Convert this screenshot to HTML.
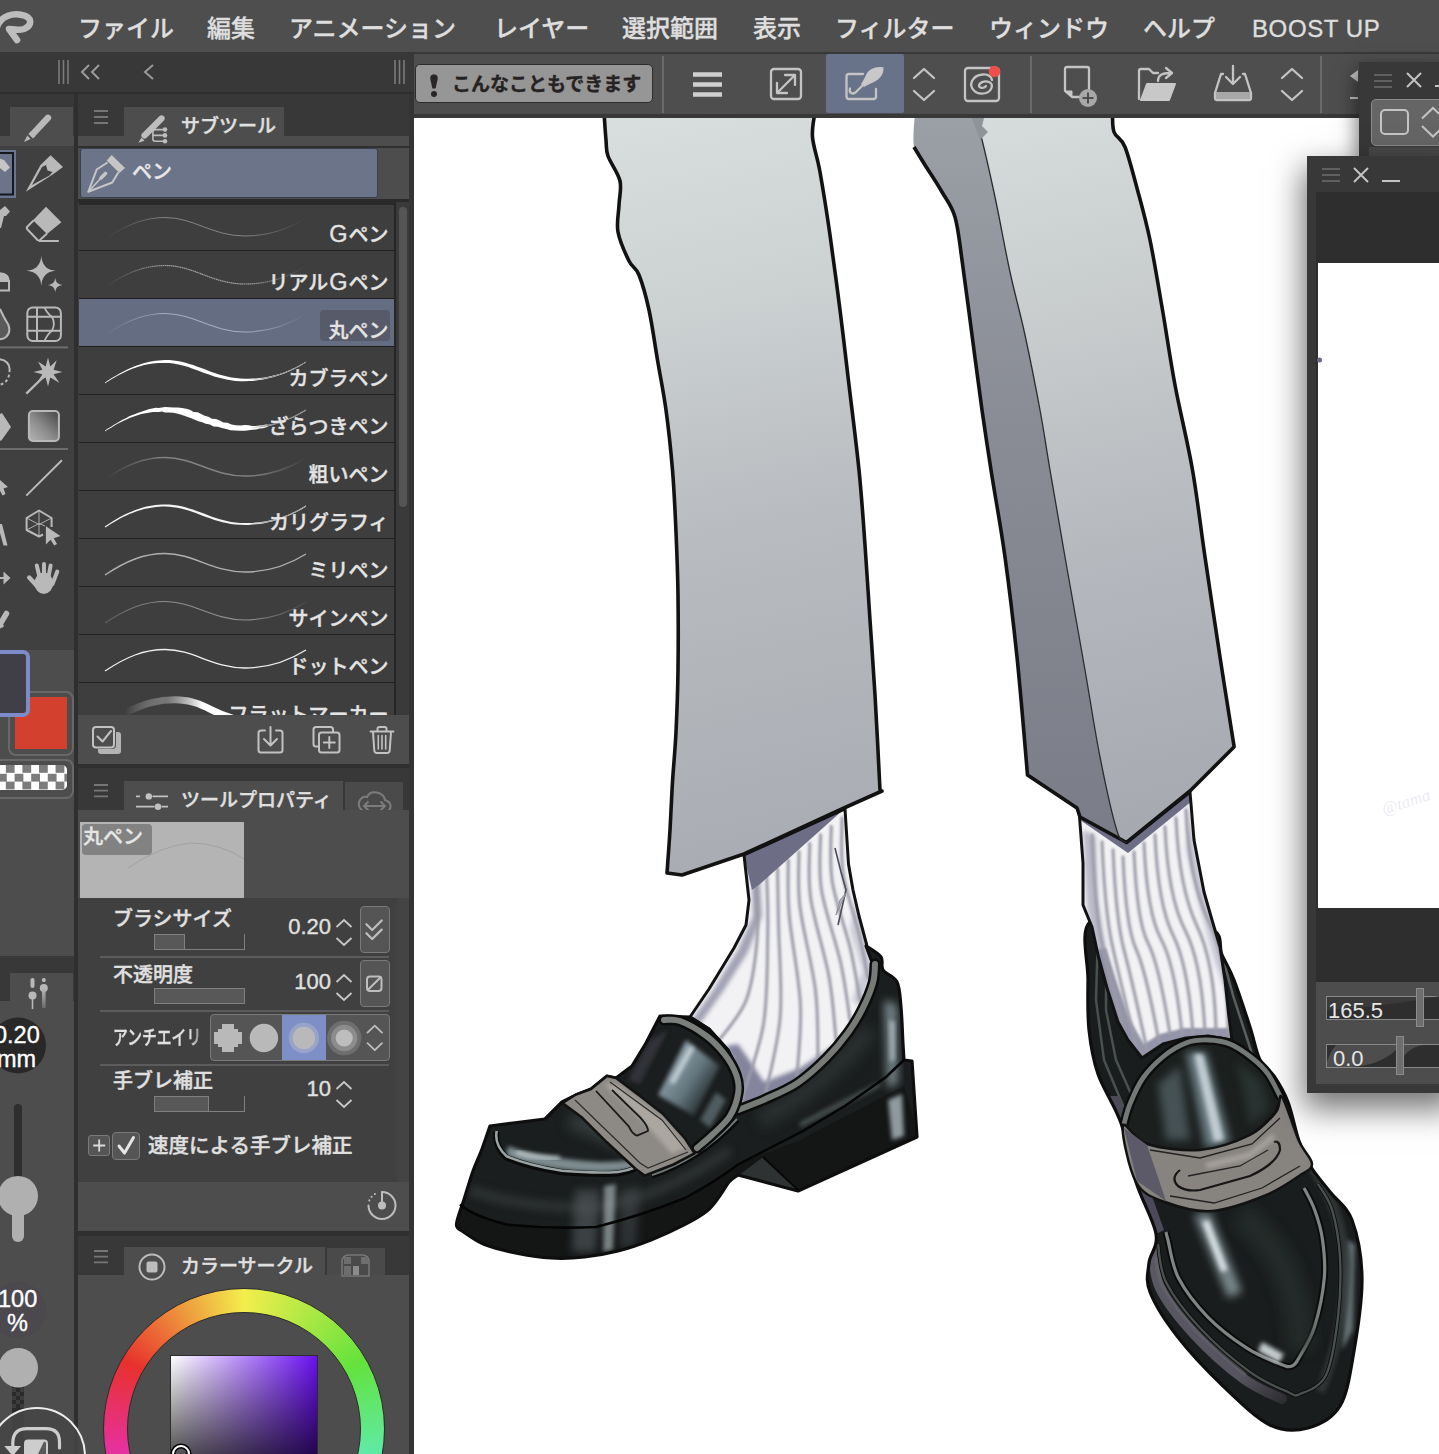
<!DOCTYPE html>
<html lang="ja">
<head>
<meta charset="utf-8">
<title>CLIP STUDIO PAINT</title>
<style>
html,body{margin:0;padding:0;background:#fff;}
body{width:1439px;height:1454px;position:relative;overflow:hidden;font-family:"Liberation Sans","Noto Sans CJK JP",sans-serif;color:#dcdcdc;}
div,span,svg,i{position:absolute;box-sizing:border-box;display:block;}
.t{white-space:nowrap;line-height:1;font-style:normal;-webkit-text-stroke:0.350px currentColor;}
#menubar{left:0;top:0;width:1439px;height:52px;background:#4e4e4e;}
#menubar .t{top:17px;font-size:24px;font-weight:500;color:#dedede;}
#bar2{left:0;top:52px;width:1439px;height:66px;background:#383838;}
#cmdbar{left:414px;top:54px;width:1025px;height:60px;background:#4e4e4e;}
.vsep{width:2px;background:#6a6a6a;top:2px;height:57px;}
#leftdock{left:0;top:93px;width:414px;height:1361px;background:#383838;}
#canvas{left:414px;top:118px;width:1025px;height:1336px;background:#fff;overflow:hidden;}
.row{left:79px;width:315px;height:47px;background:#3e3e3e;overflow:hidden;}
.row .t{right:5.500px;top:21.500px;font-size:20px;font-weight:500;color:#e4e4e4;}
.rsep{left:79px;width:315px;height:2px;background:#1e1e1e;}
.plabel{font-size:20px;font-weight:500;color:#e0e0e0;left:113px;}
.pval{font-size:22px;color:#e0e0e0;text-align:right;width:80px;left:251px;}
.psep{left:100px;width:289px;height:2px;background:#5c5c5c;}
.pbtn{left:360px;width:30px;height:47px;background:#555;border:1px solid #7a7a7a;border-radius:4px;}
.slider{left:154px;width:91px;height:16px;border-right:1px solid #808080;border-bottom:1px solid #808080;}
.slider i{left:0;top:0;height:16px;background:#585858;border:1px solid #808080;}
.ic{fill:none;stroke:#c4c4c4;stroke-width:2.300;stroke-linecap:round;stroke-linejoin:round;}
</style>
</head>
<body>
<div id="menubar">
<svg style="left:0;top:8px" width="40" height="42" viewBox="0 8 40 42"><path d="M-3 27C1 15 14 13 22 15C32 17 33 25 24 29C18 31 12 29 9 29L17 40" fill="none" stroke="#bdbdbd" stroke-width="6.500" stroke-linecap="round" stroke-linejoin="round"/></svg>
<span class="t" style="left:78px">ファイル</span>
<span class="t" style="left:207px">編集</span>
<span class="t" style="left:289px">アニメーション</span>
<span class="t" style="left:494px">レイヤー</span>
<span class="t" style="left:622px">選択範囲</span>
<span class="t" style="left:753px">表示</span>
<span class="t" style="left:835px">フィルター</span>
<span class="t" style="left:989px">ウィンドウ</span>
<span class="t" style="left:1143px">ヘルプ</span>
<span class="t" style="left:1252px;letter-spacing:0.600px">BOOST UP</span>
</div>
<div id="bar2">
<svg style="left:55px;top:6px" width="60" height="30" viewBox="0 0 60 30"><g stroke="#7a7a7a" stroke-width="1.6" fill="none"><path d="M4 2V26M8.500 2V26M13 2V26"/></g><g stroke="#9a9a9a" stroke-width="2" fill="none"><path d="M34 7L27 14L34 21M44 7L37 14L44 21"/></g></svg>
<svg style="left:140px;top:10px" width="20" height="24" viewBox="0 0 20 24"><path d="M13 3L5 10L13 17" stroke="#9a9a9a" stroke-width="2" fill="none"/></svg>
<svg style="left:392px;top:6px" width="14" height="30" viewBox="0 0 14 30"><g stroke="#7a7a7a" stroke-width="1.6" fill="none"><path d="M3 2V26M7.500 2V26M12 2V26"/></g></svg>
</div>
<div id="cmdbar">
<div style="left:1px;top:10px;width:238px;height:39px;background:#969696;border:1px solid #2c2c2c;border-radius:5px;"></div>
<svg style="left:14px;top:19px" width="12" height="26" viewBox="0 0 12 26"><path d="M6 1.500C9 1.500 10 3.500 9.700 6L7.600 15.500H4.400L2.300 6C2 3.500 3 1.500 6 1.500Z" fill="#2a2626"/><circle cx="6" cy="21" r="3" fill="#2a2626"/></svg>
<span class="t" style="left:38px;top:21px;font-size:19px;color:#262222;font-weight:700">こんなこともできます</span>
<div class="vsep" style="left:248px"></div>
<svg style="left:279px;top:17px" width="30" height="28" viewBox="0 0 30 28"><path d="M0 3.5H29M0 13.5H29M0 23.5H29" stroke="#cfcfcf" stroke-width="4.5"/></svg>
<!-- expand -->
<svg style="left:354px;top:12px" width="36" height="36" viewBox="0 0 36 36"><rect x="3" y="3" width="30" height="30" rx="3" class="ic"/><path d="M9 27L27 9M17 9H27V19M9 17V27H19" class="ic"/></svg>
<!-- selected -->
<div style="left:412px;top:0;width:78px;height:59px;background:#687289;border-radius:2px"></div>
<svg style="left:428px;top:12px" width="46" height="40" viewBox="0 0 46 40"><path d="M21 8H7Q4.500 8 4.500 10.500V30.500Q4.500 33 7 33H31.500Q34 33 34 30.500V23" class="ic" stroke-width="2.200"/><path d="M41.500 1.500C34 0 27 3 24 9C22 13 21 15 19 18L22 21C25 19 28 18 32 16C38 13 42 8 41.500 1.500Z" fill="#c8c8c8"/><path d="M20.500 19.500L14 26C11 29 6.500 27 8 22.500" class="ic" stroke-width="2.600"/></svg>
<svg style="left:497px;top:12px" width="28" height="38" viewBox="0 0 28 38"><path d="M3 12L13 3L23 12M3 25L13 34L23 25" class="ic"/></svg>
<!-- csp -->
<svg style="left:548px;top:8px" width="44" height="44" viewBox="0 0 44 44"><rect x="3" y="6" width="34" height="33" rx="3" class="ic"/><path d="M30 18C28 10 14 11 10 19C7 26 14 34 24 31C30 29 32 22 27 20C22 18 17 21 17 24C18 27 23 26 24 24" class="ic" stroke-width="3"/><circle cx="32.500" cy="9.5" r="5.800" fill="#ee4e4c"/></svg>
<div class="vsep" style="left:616px"></div>
<!-- new doc -->
<svg style="left:648px;top:11px" width="40" height="44" viewBox="0 0 40 44"><path d="M3 4Q3 2 5 2H25Q27 2 27 4V24M3 4V26L10 32H18" class="ic"/><path d="M3 26H10V32Z" fill="#c8c8c8" stroke="#c8c8c8" stroke-width="1"/><circle cx="26" cy="33" r="9" fill="#a8a8a8"/><path d="M26 27.500V38.500M20.500 33H31.500" stroke="#4e4e4e" stroke-width="2"/></svg>
<!-- folder -->
<svg style="left:722px;top:11px" width="42" height="38" viewBox="0 0 42 38"><path d="M3 34V6Q3 4 5 4H13L17 8H22" class="ic"/><path d="M22 16C22 10 26 8 34 8M30 3L36 8L30 13" class="ic"/><path d="M5 35L11 19H39L33 35Z" fill="#c8c8c8" stroke="#c8c8c8" stroke-width="2" stroke-linejoin="round"/></svg>
<!-- save -->
<svg style="left:798px;top:9px" width="44" height="40" viewBox="0 0 44 40"><path d="M11 11H9L3 30V35Q3 37 5 37H37Q39 37 39 35V30L33 11H31" class="ic"/><rect x="4" y="29" width="34" height="7" fill="#a8a8a8"/><path d="M21 3V20M14 14L21 21L28 14" class="ic"/></svg>
<svg style="left:865px;top:12px" width="28" height="38" viewBox="0 0 28 38"><path d="M3 12L13 3L23 12M3 25L13 34L23 25" class="ic"/></svg>
<div class="vsep" style="left:906px"></div>
<svg style="left:934px;top:12px" width="14" height="36" viewBox="0 0 14 36"><path d="M10 4V16L2 10Z" fill="#c8c8c8"/><path d="M2 32H10" stroke="#c8c8c8" stroke-width="2"/></svg>
</div>
<div id="leftdock"></div>
<svg style="left:0;top:0" width="0" height="0"><defs>
<linearGradient id="gF1" x1="105" y1="0" x2="306" y2="0" gradientUnits="userSpaceOnUse"><stop offset="0" stop-color="#000"/><stop offset="0.300" stop-color="#fff"/><stop offset="0.700" stop-color="#fff"/><stop offset="1" stop-color="#000"/></linearGradient>
<linearGradient id="gF2" x1="105" y1="0" x2="306" y2="0" gradientUnits="userSpaceOnUse"><stop offset="0" stop-color="#666"/><stop offset="0.300" stop-color="#fff"/><stop offset="0.700" stop-color="#fff"/><stop offset="1" stop-color="#222"/></linearGradient>
<linearGradient id="gF3" x1="105" y1="0" x2="306" y2="0" gradientUnits="userSpaceOnUse"><stop offset="0" stop-color="#000"/><stop offset="0.720" stop-color="#000"/><stop offset="0.800" stop-color="#fff"/><stop offset="1" stop-color="#fff"/></linearGradient>
<mask id="mFade" maskUnits="userSpaceOnUse" x="79" y="0" width="315" height="48"><rect x="79" width="315" height="48" fill="url(#gF1)"/></mask>
<mask id="mFade2" maskUnits="userSpaceOnUse" x="79" y="0" width="315" height="48"><rect x="79" width="315" height="48" fill="url(#gF2)"/></mask>
<mask id="mEnd" maskUnits="userSpaceOnUse" x="79" y="0" width="315" height="48"><rect x="79" width="315" height="48" fill="url(#gF3)"/></mask>
<linearGradient id="gMark" x1="125" y1="0" x2="245" y2="0" gradientUnits="userSpaceOnUse"><stop offset="0" stop-color="#fff" stop-opacity="0"/><stop offset="0.350" stop-color="#9a9a9a" stop-opacity="0.6"/><stop offset="0.650" stop-color="#fff"/><stop offset="0.900" stop-color="#fff"/><stop offset="1" stop-color="#ccc"/></linearGradient>
</defs></svg>

<div style="left:10px;top:107px;width:63px;height:30px;background:#4d4d4d;"></div>
<div style="left:0px;top:136px;width:74px;height:10px;background:#4d4d4d;"></div>
<div style="left:0px;top:146px;width:74px;height:504px;background:#404040;"></div>
<div style="left:0px;top:650px;width:74px;height:306px;background:#4d4d4d;"></div>
<div style="left:10px;top:973px;width:63px;height:30px;background:#4d4d4d;"></div>
<div style="left:0px;top:1001px;width:74px;height:453px;background:#4d4d4d;"></div>
<div style="left:74px;top:93px;width:4px;height:1361px;background:#2f2f2f;"></div>
<div style="left:409px;top:93px;width:5px;height:1361px;background:#343434;"></div>
<div style="left:0px;top:92px;width:414px;height:2px;background:#2e2e2e;"></div>
<div style="left:124px;top:107px;width:160px;height:30px;background:#4d4d4d;"></div>
<div style="left:78px;top:136px;width:331px;height:66px;background:#4d4d4d;"></div>
<div style="left:80px;top:148px;width:298px;height:50px;background:#6b7489;border:1px solid #3a3f4c;border-radius:3px;"></div>
<span class="t" style="left:132px;top:162px;font-size:20px;font-weight:500;color:#e8e8e8">ペン</span>
<span class="t" style="left:181px;top:117px;font-size:19px;font-weight:500;color:#e0e0e0">サブツール</span>
<div style="left:78px;top:199px;width:331px;height:3px;background:#2a2a2a;"></div>
<div style="left:78px;top:146px;width:331px;height:2px;background:#303030;"></div>
<div style="left:78px;top:202px;width:331px;height:513px;background:#3e3e3e;"></div>
<div class="row" style="top:203px;height:47px;background:#3e3e3e">
<svg style="left:0;top:0" width="315" height="47" viewBox="79 0 315 47"><path d="M105 36C126 22 144 14.500 165 14.500C194 14.500 212 33 245 33C270 33 290 25 306 15" fill="none" stroke="#8c8c8c" stroke-width="1" stroke-opacity="0.9" mask="url(#mFade)"/></svg>
<span class="t"><b style="font-weight:inherit;font-size:23.500px;margin:0 1px;line-height:0">G</b>ペン</span></div>
<div style="left:79px;top:250px;width:315px;height:2px;background:#1e1e1e;"></div>
<div class="row" style="top:251px;height:47px;background:#3e3e3e">
<svg style="left:0;top:0" width="315" height="47" viewBox="79 0 315 47"><path d="M105 36C126 22 144 14.500 165 14.500C194 14.500 212 33 245 33C270 33 290 25 306 15" fill="none" stroke="#a2a2a2" stroke-width="1.200" stroke-dasharray="1.500 0.400" mask="url(#mFade)"/></svg>
<span class="t">リアル<b style="font-weight:inherit;font-size:23.500px;margin:0 1px;line-height:0">G</b>ペン</span></div>
<div style="left:79px;top:298px;width:315px;height:2px;background:#1e1e1e;"></div>
<div class="row" style="top:299px;height:47px;background:#656d82">
<svg style="left:0;top:0" width="315" height="47" viewBox="79 0 315 47"><path d="M105 36C126 22 144 14.500 165 14.500C194 14.500 212 33 245 33C270 33 290 25 306 15" fill="none" stroke="#a3adc4" stroke-width="1.100" mask="url(#mFade)"/></svg>
<div style="left:241px;top:11px;width:70px;height:31px;background:#565a69;border-radius:4px"></div>
<span class="t">丸ペン</span></div>
<div style="left:79px;top:346px;width:315px;height:2px;background:#1e1e1e;"></div>
<div class="row" style="top:347px;height:47px;background:#3e3e3e">
<svg style="left:0;top:0" width="315" height="47" viewBox="79 0 315 47"><path d="M105.2 36.3L108.3 34.3L111.4 32.3L114.5 30.5L117.5 28.8L120.5 27.2L123.5 25.7L126.5 24.3L129.4 23.0L132.3 21.8L135.3 20.7L138.2 19.7L141.1 18.9L144.0 18.1L147.0 17.5L149.9 17.0L152.9 16.5L155.9 16.2L158.9 16.0L161.9 15.9L165.0 15.9L169.2 16.1L173.2 16.6L177.1 17.2L180.9 18.0L184.6 19.0L188.3 20.1L192.0 21.4L195.6 22.7L199.2 24.0L202.9 25.4L206.6 26.8L210.4 28.1L214.2 29.4L218.2 30.6L222.3 31.6L226.5 32.6L230.8 33.3L235.4 33.9L240.1 34.2L245.0 34.3L248.8 34.1L252.4 33.9L256.0 33.5L259.5 33.1L263.0 32.5L266.3 31.8L269.6 31.1L272.8 30.3L276.0 29.3L279.1 28.3L282.1 27.3L285.0 26.2L287.9 25.0L290.7 23.7L293.4 22.4L296.1 21.1L298.7 19.7L301.3 18.2L303.7 16.8L306.2 15.3L305.8 14.7L303.4 16.2L300.9 17.6L298.3 19.0L295.7 20.4L293.0 21.6L290.3 22.9L287.5 24.0L284.6 25.2L281.7 26.2L278.7 27.2L275.6 28.0L272.5 28.8L269.3 29.5L266.0 30.2L262.7 30.7L259.3 31.1L255.8 31.4L252.3 31.6L248.7 31.7L245.0 31.7L240.2 31.5L235.7 31.1L231.3 30.4L227.1 29.6L223.0 28.6L219.1 27.4L215.3 26.2L211.5 24.9L207.8 23.5L204.1 22.1L200.5 20.7L196.8 19.4L193.1 18.1L189.3 16.9L185.5 15.8L181.7 14.8L177.7 14.0L173.6 13.5L169.4 13.1L165.0 13.1L161.8 13.2L158.7 13.4L155.6 13.8L152.5 14.2L149.5 14.8L146.5 15.5L143.6 16.3L140.6 17.2L137.7 18.2L134.7 19.3L131.8 20.5L128.9 21.8L125.9 23.2L123.0 24.7L120.0 26.3L117.1 28.0L114.0 29.8L111.0 31.6L107.9 33.6L104.8 35.7Z" fill="#fff"/><path d="M105 36C126 22 144 14.500 165 14.500C194 14.500 212 33 245 33C270 33 290 25 306 15" fill="none" stroke="#8a8a8a" stroke-width="1" mask="url(#mEnd)"/></svg>
<span class="t">カブラペン</span></div>
<div style="left:79px;top:394px;width:315px;height:2px;background:#1e1e1e;"></div>
<div class="row" style="top:395px;height:47px;background:#3e3e3e">
<svg style="left:0;top:0" width="315" height="47" viewBox="79 0 315 47"><path d="M105.2 36.3L108.3 34.3L111.5 32.4L114.5 30.5L117.5 28.8L120.6 27.3L123.6 25.8L126.5 24.4L129.5 23.1L132.4 21.9L135.3 20.9L138.3 20.0L141.2 19.1L144.2 18.6L147.1 18.0L150.0 17.6L153.0 17.1L155.9 16.9L159.0 17.1L161.9 16.5L165.0 17.4L169.1 17.4L173.1 17.8L176.9 18.4L180.6 19.5L184.2 20.7L187.7 22.1L191.3 23.2L194.8 24.7L198.4 26.2L202.2 27.3L205.8 28.8L209.9 29.5L213.5 31.5L217.8 31.7L221.9 33.1L226.2 33.9L230.5 35.2L235.2 35.4L240.0 35.7L245.0 35.8L248.8 35.2L252.5 34.7L256.1 34.5L259.6 33.6L263.1 33.2L266.4 32.2L269.5 30.7L272.8 30.0L275.9 29.1L279.0 28.1L282.0 27.1L285.0 26.1L287.8 24.8L290.6 23.6L293.4 22.4L296.1 21.0L298.7 19.6L301.2 18.2L303.7 16.8L306.2 15.3L305.8 14.7L303.4 16.3L300.9 17.6L298.4 19.1L295.8 20.5L293.1 21.7L290.4 23.0L287.5 24.2L284.7 25.3L281.7 26.4L278.8 27.4L275.7 28.3L272.6 29.1L269.3 29.8L265.9 29.4L262.6 30.2L259.2 30.4L255.8 30.9L252.2 31.0L248.6 30.3L245.0 30.1L240.3 30.4L235.8 30.2L231.5 29.4L227.5 27.7L223.4 27.4L219.7 25.4L216.0 23.9L211.9 23.7L208.4 21.7L204.6 20.8L201.1 19.0L197.6 17.2L193.5 16.9L190.0 14.7L186.1 13.8L182.1 13.0L177.9 12.6L173.7 12.4L169.4 12.2L165.0 12.1L161.8 12.5L158.7 12.9L155.5 12.8L152.4 13.5L149.4 14.1L146.4 14.9L143.5 16.0L140.6 17.1L137.6 17.9L134.7 19.3L131.7 20.3L128.8 21.6L126.0 23.2L123.0 24.6L120.0 26.3L117.1 28.0L114.0 29.7L111.0 31.7L107.9 33.6L104.8 35.7Z" fill="#fff"/><path d="M105 36C126 22 144 14.500 165 14.500C194 14.500 212 33 245 33C270 33 290 25 306 15" fill="none" stroke="#8a8a8a" stroke-width="1.200" mask="url(#mEnd)"/></svg>
<span class="t">ざらつきペン</span></div>
<div style="left:79px;top:442px;width:315px;height:2px;background:#1e1e1e;"></div>
<div class="row" style="top:443px;height:47px;background:#3e3e3e">
<svg style="left:0;top:0" width="315" height="47" viewBox="79 0 315 47"><path d="M105 36C126 22 144 14.500 165 14.500C194 14.500 212 33 245 33C270 33 290 25 306 15" fill="none" stroke="#838383" stroke-width="1.500" mask="url(#mFade)"/></svg>
<span class="t">粗いペン</span></div>
<div style="left:79px;top:490px;width:315px;height:2px;background:#1e1e1e;"></div>
<div class="row" style="top:491px;height:47px;background:#3e3e3e">
<svg style="left:0;top:0" width="315" height="47" viewBox="79 0 315 47"><path d="M105.3 36.5L108.4 34.4L111.5 32.5L114.6 30.7L117.6 28.9L120.6 27.3L123.6 25.8L126.5 24.4L129.4 23.1L132.4 21.9L135.3 20.8L138.2 19.8L141.1 18.9L144.0 18.1L147.0 17.4L149.9 16.9L152.9 16.4L155.8 16.0L158.9 15.8L161.9 15.6L165.0 15.6L169.2 15.8L173.3 16.2L177.2 16.8L181.0 17.6L184.8 18.5L188.5 19.6L192.1 20.8L195.8 22.1L199.4 23.5L203.1 24.9L206.8 26.2L210.6 27.6L214.4 28.9L218.3 30.1L222.4 31.2L226.6 32.1L230.9 32.9L235.4 33.5L240.1 33.8L245.0 33.9L248.7 33.9L252.4 33.6L256.0 33.3L259.5 32.9L263.0 32.4L266.3 31.7L269.6 31.0L272.8 30.2L276.0 29.3L279.1 28.4L282.1 27.3L285.0 26.2L287.9 25.0L290.7 23.8L293.5 22.5L296.1 21.2L298.8 19.8L301.3 18.4L303.8 16.9L306.2 15.4L305.8 14.6L303.3 16.1L300.8 17.5L298.3 18.9L295.7 20.2L293.0 21.5L290.3 22.8L287.5 24.0L284.6 25.1L281.7 26.2L278.7 27.1L275.6 28.0L272.5 28.9L269.3 29.6L266.0 30.3L262.7 30.8L259.3 31.3L255.8 31.6L252.3 31.9L248.7 32.0L245.0 32.1L240.2 31.9L235.6 31.5L231.2 30.9L227.0 30.0L222.9 29.1L219.0 27.9L215.1 26.7L211.3 25.4L207.6 24.0L203.9 22.6L200.3 21.3L196.6 19.9L192.9 18.6L189.2 17.4L185.4 16.2L181.6 15.3L177.6 14.5L173.5 13.9L169.3 13.5L165.0 13.4L161.8 13.5L158.7 13.7L155.6 14.0L152.6 14.4L149.5 14.9L146.5 15.6L143.6 16.3L140.6 17.2L137.7 18.2L134.7 19.2L131.8 20.4L128.8 21.7L125.9 23.1L122.9 24.6L120.0 26.1L117.0 27.8L114.0 29.6L110.9 31.5L107.8 33.5L104.7 35.5Z" fill="#f4f4f4"/><path d="M105 36C126 22 144 14.500 165 14.500C194 14.500 212 33 245 33C270 33 290 25 306 15" fill="none" stroke="#9a9a9a" stroke-width="1" mask="url(#mEnd)"/></svg>
<span class="t">カリグラフィ</span></div>
<div style="left:79px;top:538px;width:315px;height:2px;background:#1e1e1e;"></div>
<div class="row" style="top:539px;height:47px;background:#3e3e3e">
<svg style="left:0;top:0" width="315" height="47" viewBox="79 0 315 47"><path d="M105 36C126 22 144 14.500 165 14.500C194 14.500 212 33 245 33C270 33 290 25 306 15" fill="none" stroke="#b0b0b0" stroke-width="1.400"/></svg>
<span class="t">ミリペン</span></div>
<div style="left:79px;top:586px;width:315px;height:2px;background:#1e1e1e;"></div>
<div class="row" style="top:587px;height:47px;background:#3e3e3e">
<svg style="left:0;top:0" width="315" height="47" viewBox="79 0 315 47"><path d="M105 36C126 22 144 14.500 165 14.500C194 14.500 212 33 245 33C270 33 290 25 306 15" fill="none" stroke="#8f8f8f" stroke-width="1.200" mask="url(#mFade2)"/></svg>
<span class="t">サインペン</span></div>
<div style="left:79px;top:634px;width:315px;height:2px;background:#1e1e1e;"></div>
<div class="row" style="top:635px;height:47px;background:#3e3e3e">
<svg style="left:0;top:0" width="315" height="47" viewBox="79 0 315 47"><path d="M105 36C126 22 144 14.500 165 14.500C194 14.500 212 33 245 33C270 33 290 25 306 15" fill="none" stroke="#f0f0f0" stroke-width="1.300"/></svg>
<span class="t">ドットペン</span></div>
<div style="left:79px;top:682px;width:315px;height:2px;background:#1e1e1e;"></div>
<div class="row" style="top:683px;height:32px;background:#3e3e3e">
<svg style="left:0;top:0" width="315" height="47" viewBox="79 0 315 47"><path d="M125 30C145 20 160 16 180 17C205 18 215 34 245 38" fill="none" stroke="url(#gMark)" stroke-width="7"/></svg>
<span class="t">フラットマーカー</span></div>
<div style="left:79px;top:202px;width:315px;height:2.5px;background:#2a2a2a;"></div>
<div style="left:394px;top:202px;width:2px;height:513px;background:#262626;"></div>
<div style="left:396px;top:202px;width:13px;height:513px;background:#3a3a3a;"></div>
<div style="left:399px;top:207px;width:8px;height:300px;background:#555;border-radius:4px;"></div>
<div style="left:78px;top:715px;width:331px;height:49px;background:#4d4d4d;"></div>
<div style="left:78px;top:764px;width:331px;height:4px;background:#2f2f2f;"></div>
<div style="left:124px;top:781px;width:219px;height:30px;background:#4d4d4d;"></div>
<div style="left:345px;top:782px;width:58px;height:28px;background:#4a4a4a;"></div>
<div style="left:78px;top:810px;width:331px;height:88px;background:#4d4d4d;"></div>
<span class="t" style="left:181px;top:791px;font-size:19px;font-weight:500;color:#e0e0e0">ツールプロパティ</span>
<div style="left:80px;top:822px;width:164px;height:76px;background:#b4b4b4;"></div>
<div style="left:82px;top:824px;width:70px;height:31px;background:#828282;border-radius:4px;"></div>
<span class="t" style="left:83px;top:827px;font-size:20px;font-weight:500;color:#e6e6e6">丸ペン</span>
<div style="left:78px;top:898px;width:331px;height:284px;background:#404040;"></div>
<div style="left:397px;top:898px;width:12px;height:284px;background:#444;"></div>
<span class="t plabel" style="top:909px">ブラシサイズ</span>
<span class="t pval" style="top:916px">0.20</span>
<div class="slider" style="top:934px"><i style="width:31px"></i></div>
<svg style="left:334px;top:915px" width="20" height="36" viewBox="0 0 20 36"><path d="M2.500 12L10 5L17.500 12M2.500 23L10 30L17.500 23" fill="none" stroke="#c8c8c8" stroke-width="1.800"/></svg>
<div class="pbtn" style="top:906px"></div>
<div class="psep" style="top:956px"></div>
<span class="t plabel" style="top:965px">不透明度</span>
<span class="t pval" style="top:971px">100</span>
<div class="slider" style="top:988px"><i style="width:91px"></i></div>
<svg style="left:334px;top:970px" width="20" height="36" viewBox="0 0 20 36"><path d="M2.500 12L10 5L17.500 12M2.500 23L10 30L17.500 23" fill="none" stroke="#c8c8c8" stroke-width="1.800"/></svg>
<div class="pbtn" style="top:960px"></div>
<div class="psep" style="top:1010px"></div>
<span class="t plabel" style="top:1028px;transform:scaleX(0.74);transform-origin:0 0;">アンチエイリ</span>
<div style="left:190px;top:1020px;width:20px;height:36px;background:linear-gradient(90deg,rgba(64,64,64,0),#404040);"></div>
<div style="left:210px;top:1014px;width:180px;height:47px;background:#555;border:1px solid #7a7a7a;border-radius:4px;"></div>
<div style="left:282px;top:1015px;width:44px;height:45px;background:#7d8fc6;"></div>
<div style="left:100px;top:1064px;width:289px;height:2px;background:#5c5c5c;"></div>
<span class="t plabel" style="top:1071px">手ブレ補正</span>
<span class="t pval" style="top:1078px">10</span>
<div class="slider" style="top:1096px"><i style="width:55px"></i></div>
<svg style="left:334px;top:1077px" width="20" height="36" viewBox="0 0 20 36"><path d="M2.500 12L10 5L17.500 12M2.500 23L10 30L17.500 23" fill="none" stroke="#c8c8c8" stroke-width="1.800"/></svg>
<div style="left:88px;top:1135px;width:22px;height:21px;background:#555;border:1px solid #7a7a7a;border-radius:3px;"></div>
<div style="left:112px;top:1132px;width:28px;height:28px;background:#555;border:1px solid #7a7a7a;border-radius:4px;"></div>
<span class="t" style="left:148px;top:1136px;font-size:20.5px;font-weight:500;color:#e0e0e0">速度による手ブレ補正</span>
<div style="left:78px;top:1182px;width:331px;height:49px;background:#4d4d4d;"></div>
<div style="left:78px;top:1231px;width:331px;height:5px;background:#2f2f2f;"></div>
<div style="left:124px;top:1247px;width:201px;height:30px;background:#4d4d4d;"></div>
<div style="left:327px;top:1248px;width:58px;height:28px;background:#4a4a4a;"></div>
<div style="left:78px;top:1275px;width:331px;height:179px;background:#4d4d4d;"></div>
<span class="t" style="left:181px;top:1257px;font-size:19px;font-weight:500;color:#e0e0e0">カラーサークル</span>
<div style="left:103px;top:1288px;width:282px;height:282px;border-radius:50%;background:conic-gradient(from -60deg,#e8312c,#f3ee4c,#64e23c,#5deed8,#3a46e8,#e630d8,#e8312c);border:1px solid #2c2c2c"></div>
<div style="left:127px;top:1312px;width:234px;height:234px;border-radius:50%;background:#4d4d4d;border:1px solid #2c2c2c"></div>
<div style="left:170px;top:1355px;width:148px;height:148px;background:linear-gradient(180deg,rgba(0,0,0,0),#000),linear-gradient(90deg,#fff,#6a10f0);border:1px solid #2c2c2c"></div>
<div style="left:172px;top:1445px;width:18px;height:18px;border-radius:50%;border:2px solid #fff;box-shadow:0 0 0 1.5px #000, inset 0 0 0 1.5px #000"></div>
<svg style="left:78px;top:100px" width="336" height="1354" viewBox="78 100 336 1354">
<g fill="none" stroke="#767676" stroke-width="1.800">
<path d="M94 111H108M94 117H108M94 123H108"/>
<path d="M94 785H108M94 790.700H108M94 796.400H108"/>
<path d="M94 1251H108M94 1256.700H108M94 1262.400H108"/>
</g>
<defs><clipPath id="cTab2"><rect x="345" y="779" width="58" height="28"/></clipPath></defs>
<!-- subtool tab icon -->
<g fill="#bdbdbd" stroke="none">
<path d="M144.500 135.500L161.500 118.500" stroke="#bdbdbd" stroke-width="6.200" stroke-linecap="round" fill="none"/>
<path d="M141.400 137.600L144.600 140.800L138.400 142.700Z"/>
<circle cx="165" cy="129.600" r="2.300"/><circle cx="165" cy="135.400" r="2.300"/><circle cx="165" cy="141.200" r="2.300"/>
<path d="M165 129.600H155Q152.900 129.600 152.900 132V139Q152.900 141.200 155 141.200H165M152.900 135.400H165" fill="none" stroke="#bdbdbd" stroke-width="1.600"/>
</g>
<!-- pen nib in group button -->
<path d="M111.700 155.100L125 167.900L119.500 172.900L106.700 160.600Z" fill="#c6c6c6"/>
<path d="M107.500 162.500L96.700 169.500L88.300 191.800L112.300 182.500L118.400 172.300" fill="none" stroke="#c6c6c6" stroke-width="2" stroke-linejoin="round"/>
<path d="M88.300 191.800L102 177" fill="none" stroke="#c6c6c6" stroke-width="1.600"/>
<path d="M101 178L105.500 173.500" fill="none" stroke="#c6c6c6" stroke-width="3.600" stroke-linecap="round"/>
<!-- bottom bar icons -->
<g fill="none" stroke="#c2c2c2" stroke-width="2" stroke-linejoin="round" stroke-linecap="round">
<path d="M98 750V751Q98 754 101 754H118Q121 754 121 751V735Q121 732 118 732H116V745Q116 749 112 749H98Z" fill="#b4b4b4" stroke="none"/>
<rect x="93" y="727" width="21" height="20.500" rx="3"/>
<path d="M97.500 736.500L102.500 741.500L111 731"/>
<path d="M265 730.500H261Q258.500 730.500 258.500 733V750Q258.500 752.500 261 752.500H280Q282.500 752.500 282.500 750V733Q282.500 730.500 280 730.500H276"/>
<path d="M270.500 727V745M264 739L270.500 745.500L277 739"/>
<path d="M318.500 746.500H316Q313.500 746.500 313.500 744V729.500Q313.500 727 316 727H330.500Q333 727 333 729.500V732"/>
<rect x="319" y="732.500" width="20.500" height="20" rx="2.500"/>
<path d="M329.300 737V748M323.800 742.500H334.800"/>
<path d="M370.500 731.500H393.500M377.500 731V729Q377.500 727 379.500 727H384.500Q386.500 727 386.500 729V731"/>
<path d="M373 732L374.300 750.500Q374.500 753 377 753H387Q389.500 753 389.700 750.500L391 732"/>
<path d="M378.300 735.500V749M382 735.500V749M385.700 735.500V749" stroke-width="1.600"/>
</g>
<!-- tool property tab icon -->
<g stroke="#c2c2c2" stroke-width="1.800" fill="#c2c2c2">
<path d="M136 796.400H140M152.500 796.400H168M136 806.700H154.500M161.500 806.700H168" fill="none"/>
<circle cx="148.800" cy="796.400" r="3.200" stroke="none"/><circle cx="158" cy="806.700" r="3.200" stroke="none"/>
</g>
<g fill="none" stroke="#7c7c7c" stroke-width="2" transform="translate(0 3)" clip-path="url(#cTab2)">
<path d="M363 808Q357 804 359.500 798Q362 793 367 794Q370 788 377 789.500Q384 791 385 797Q391 799 390.500 804Q390 807 388 808"/>
<path d="M364 803H385M368.500 798.500L364 803L368.500 807.500M380.500 798.500L385 803L380.500 807.500"/>
</g>
<path d="M128 868Q160 846 190 843Q220 843 244 859" fill="none" stroke="#a2a2a2" stroke-width="1"/>
<!-- prop buttons icons -->
<g fill="none" stroke="#bebebe" stroke-width="2.200" stroke-linecap="round" stroke-linejoin="round">
<path d="M366.400 924.200L372.200 930L381.700 920.500M366.400 933.200L372.200 939L381.700 929.600"/>
<rect x="367" y="976.500" width="14.500" height="14.500" rx="3" stroke-width="2"/>
<path d="M367.800 990L380.600 977.200" stroke-width="2"/>
<path d="M367.500 1032.600L374.800 1025.600L382 1032.600M367.500 1043.100L374.800 1050.100L382 1043.100" stroke-width="1.800"/>
</g>
<!-- antialias icons -->
<path d="M222 1024H234V1029H238V1032H242V1044H238V1047H234V1052H222V1047H218V1044H214V1032H218V1029H222Z" fill="#b9b9b9"/>
<circle cx="263.900" cy="1038" r="14.200" fill="#b9b9b9"/>
<circle cx="303.900" cy="1038" r="15.200" fill="#98a3c8"/><circle cx="303.900" cy="1038" r="11.200" fill="#b9b9b9"/>
<circle cx="344.200" cy="1038" r="17.200" fill="#6e6e6e"/><circle cx="344.200" cy="1038" r="13.200" fill="#8c8c8c"/><circle cx="344.200" cy="1038" r="8.600" fill="#bdbdbd"/>
<!-- plus / check -->
<path d="M99.200 1139.500V1151.500M93.200 1145.500H105.200" stroke="#dcdcdc" stroke-width="1.800" fill="none"/>
<path d="M119 1146L124.500 1153L133.500 1137.500" stroke="#e6e6e6" stroke-width="3" fill="none" stroke-linecap="round" stroke-linejoin="round"/>
<!-- timer icon -->
<g fill="none" stroke="#bdbdbd" stroke-width="2" stroke-linecap="round">
<path d="M382 1192A13.500 13.500 0 1 1 368.500 1205.500"/>
<path d="M369.300 1200.500A13.500 13.500 0 0 1 377 1193" stroke-dasharray="0.100 4.200"/>
<path d="M382 1192V1205.500"/>
</g>
<circle cx="382" cy="1205.500" r="4" fill="#bdbdbd"/>
<!-- colour circle tab icons -->
<circle cx="152" cy="1267" r="12.500" fill="none" stroke="#bdbdbd" stroke-width="2"/>
<rect x="146.500" y="1261.500" width="11" height="11" rx="2" fill="#bdbdbd"/>
<g fill="#6e6e6e"><path d="M342 1262Q342 1255 349 1255H362Q369 1255 369 1262V1276H342Z" fill="none" stroke="#767676" stroke-width="1.600"/><rect x="344" y="1257" width="7" height="7"/><rect x="353" y="1266" width="6" height="9" fill="#8c8c8c"/><rect x="361" y="1257" width="7" height="7"/><rect x="344" y="1266" width="7" height="9"/></g>
</svg>
<svg style="left:0;top:100px" width="74" height="560" viewBox="0 100 74 560">
<g fill="#b9b9b9" stroke="none">
<!-- tab pencil -->
<path d="M33.200 133.600L48 117.800" stroke="#b9b9b9" stroke-width="6.400" stroke-linecap="round" fill="none"/>
<path d="M30.900 131.300L35.600 135.900L33 138.500L28.400 133.900Z"/>
<path d="M27.400 135.500L30.600 139.100L24 141.900Z"/>
<!-- selected tool -->
<rect x="-4" y="150" width="20" height="48" fill="#6a7591"/>
<rect x="-4" y="153" width="17" height="41.500" fill="#6b7489" stroke="#15171d" stroke-width="2"/>
<path d="M-2 158L4 160L10 167.500L5 172L0 168L-3 174L-3 158Z" fill="#c6c6c6"/>
<!-- pen nib -->
<path d="M25.800 191.800L40.500 165L50.600 155.200L63 167.100L53.100 174.300ZM32 185L49.500 175.500L52.500 172L47.500 170.500L46 165L42 167Z" fill-rule="evenodd"/>
<!-- eraser -->
<path d="M46 206.800L61.400 222.300L47 233.900L33 220.200Z"/>
<path d="M33.500 220.500L27.500 226.500Q26 228 27.500 229.500L37.500 240Q38.700 241 40 240L47 233.500M39 240.900H58.800" fill="none" stroke="#b9b9b9" stroke-width="2"/>
<!-- left partial: bucket-ish -->
<path d="M0 210L5 206L10 211.500L6 216L4 216L1 228L-2 228Z"/>
<!-- sparkle -->
<path d="M41.300 255.800Q42.300 269.800 55.700 270.800Q42.300 271.800 41.300 285.800Q40.300 271.800 26.300 270.800Q40.300 269.800 41.300 255.800Z"/>
<path d="M55.200 278Q55.800 284.400 62.400 285Q55.800 285.600 55.200 292Q54.600 285.600 48 285Q54.600 284.400 55.200 278Z"/>
<!-- dome partial -->
<path d="M-2 272.300Q9.500 272.300 9.800 281H-2Z"/>
<path d="M-2 281H9V290.500H-2" fill="none" stroke="#b9b9b9" stroke-width="2"/>
<!-- mesh -->
<g fill="none" stroke="#b9b9b9" stroke-width="2">
<rect x="27.300" y="307.400" width="33.600" height="33.600" rx="5.500"/>
<path d="M37 307.400V341M27.300 316.700H60.900M27.300 330.700H60.900"/>
<path d="M44.400 307.400Q47.500 314 52 316.700Q55.700 323.400 52 330.700Q47.500 334 44.400 341" stroke-width="1.800"/>
</g>
<!-- drop partial -->
<path d="M0 309Q4 318 8 324Q11.500 332 6 337Q3 339.500 -2 339.400" fill="#5a5a5a" stroke="#b9b9b9" stroke-width="2"/>
<rect x="0" y="346.400" width="68" height="2" fill="#6c6c6c"/>
<!-- wand -->
<path d="M48 357.500L50.300 366.400L56.700 360.300L53.600 369.700L62.400 372L53.600 374.300L59.500 383L50.300 377.600L48 386.400L45.700 377.600L37.800 381.500L42.400 374.300L33.500 372L42.400 369.700L38 361.500L45.700 366.400Z"/>
<path d="M45.400 375L26.300 393.600" stroke="#b9b9b9" stroke-width="2.400" fill="none"/>
<!-- dashed lasso partial -->
<path d="M-2 359Q9 360 9.600 369" fill="none" stroke="#b9b9b9" stroke-width="2"/>
<path d="M9.600 369Q9.600 384 -2 385" fill="none" stroke="#b9b9b9" stroke-width="2" stroke-dasharray="3 2.500"/>
<!-- gradient -->
<rect x="28.900" y="411" width="30" height="30" rx="4" fill="url(#gTool)" stroke="#b9b9b9" stroke-width="2"/>
<path d="M-2 415L2 413L11 427L1 441L-2 439Z"/>
<rect x="0" y="448" width="68" height="2" fill="#6c6c6c"/>
<!-- line -->
<path d="M26.300 495.600L61.900 460.200" stroke="#b9b9b9" stroke-width="2" fill="none"/>
<!-- cursor partial -->
<path d="M-1 479L8 487L3.500 488.500L5.500 494L2.500 495.500L-1 489Z"/>
<!-- cube -->
<g fill="none" stroke="#b9b9b9" stroke-width="2" stroke-linejoin="round">
<path d="M51.600 527V518L39 510.500L26.600 518V530L39 536.500L43 534.500"/>
<path d="M39 510.500V536.500M26.600 518L39 524.500L51.600 518M26.600 530L39 523.500L45 526" stroke-width="0.900"/>
</g>
<path d="M45.900 526.300L45.900 544.400L50.600 539.700L54.200 545.400L57 543.900L53.700 538.200L60.400 536.100Z"/>
<!-- A partial -->
<path d="M-1 524L2 524L7.500 545.500L3.500 545.500L0 533Z"/>
<!-- hand -->
<ellipse cx="43.800" cy="583.300" rx="9.400" ry="10.700"/>
<g stroke="#b9b9b9" stroke-width="4" stroke-linecap="round" fill="none">
<path d="M39.500 577L36.800 565.500M44 576V564M48.500 577L50.600 565.500M52.500 584L57.300 571.500"/>
<path d="M37 586L29.200 577.500" stroke-width="4.400"/>
</g>
<!-- arrow partial -->
<path d="M3.500 571.500L10.500 578L3.500 584.500Z"/>
<path d="M-1 578H5" stroke="#b9b9b9" stroke-width="2"/>
<!-- eyedropper partial -->
<path d="M-1 626L6.500 613.500" stroke="#b9b9b9" stroke-width="5.500" stroke-linecap="round"/>
<path d="M-2 621L3 627" stroke="#b9b9b9" stroke-width="3"/>
</g>
<defs><linearGradient id="gTool" x1="0" y1="1" x2="1" y2="0"><stop offset="0" stop-color="#b4b4b4"/><stop offset="0.450" stop-color="#8c8c8c"/><stop offset="1" stop-color="#444"/></linearGradient></defs>
</svg>
<!-- colour swatches -->
<div style="left:8px;top:691px;width:66px;height:65px;border:2px solid #686868;border-radius:8px;"></div>
<div style="left:15px;top:697px;width:52px;height:52px;background:#d3402e;"></div>
<div style="left:-8px;top:650px;width:38px;height:67px;background:#403e46;border:4px solid #7d8cc8;border-radius:7px;"></div>
<div style="left:-8px;top:759px;width:82px;height:40px;border:2px solid #686868;border-radius:8px;"></div>
<div style="left:0;top:765px;width:67px;height:25px;border-radius:0 5px 5px 0;background:repeating-conic-gradient(#7c7c7c 0 25%,#fff 0 50%) -2px 0/16.600px 16.600px;"></div>
<!-- brush size panel -->
<svg style="left:0;top:970px" width="90" height="484" viewBox="0 970 90 484">
<g fill="#b9b9b9">
<rect x="30.500" y="978" width="4" height="10" rx="2"/><circle cx="32.500" cy="995.500" r="4"/><rect x="31.700" y="995" width="1.600" height="14"/>
<rect x="42" y="978" width="3.600" height="4" rx="1.500"/><circle cx="43.800" cy="988" r="4"/><rect x="42" y="988" width="3.600" height="20" fill="url(#gSl)"/>
</g>
<defs><linearGradient id="gSl" x1="0" y1="0" x2="0" y2="1"><stop offset="0" stop-color="#b9b9b9"/><stop offset="1" stop-color="#6a6a6a"/></linearGradient></defs>
<circle cx="18" cy="1045.500" r="28" fill="#282828"/>
<rect x="14" y="1104" width="8" height="80" rx="4" fill="#2e2e2e"/>
<circle cx="18" cy="1196" r="20" fill="#b0b0b0"/>
<rect x="12" y="1205" width="12" height="37" rx="6" fill="#b0b0b0"/>
<circle cx="18" cy="1310" r="28" fill="#4b484e"/>
<rect x="12" y="1380" width="12" height="74" fill="#2a2a2a"/>
<path d="M12 1388h4v4h-4zM16 1392h4v4h-4zM20 1388h4v4h-4zM12 1396h4v4h-4zM20 1396h4v4h-4zM16 1400h4v4h-4zM12 1404h4v4h-4zM20 1404h4v4h-4z" fill="#3c3c3c"/>
<circle cx="18.300" cy="1367.700" r="19.700" fill="#b0b0b0"/>
<circle cx="37" cy="1456" r="48" fill="#464646" fill-opacity="0.880" stroke="#ececec" stroke-width="2"/>
<path d="M59.500 1448V1442Q59.500 1428.600 46 1428.600H27Q12.800 1428.600 12.800 1443V1447" fill="none" stroke="#cdcdcd" stroke-width="3.200" stroke-linecap="round"/>
<path d="M4.300 1446H21L12.700 1456Z" fill="#cdcdcd"/>
<path d="M25 1456V1443.500Q25 1440.500 28 1440.500H44Q47 1440.500 47 1443.500V1456" fill="#5a5a5a" stroke="#cdcdcd" stroke-width="2"/>
<path d="M25 1456V1443.500Q25 1440.500 28 1440.500H44.500L37 1456Z" fill="#cdcdcd"/>
</svg>
<span class="t" style="left:-6px;top:1023.500px;font-size:23.500px;font-weight:500;color:#fff;">0.20</span>
<span class="t" style="left:-3px;top:1047.500px;font-size:23.500px;font-weight:500;color:#fff;">mm</span>
<span class="t" style="left:-2px;top:1287.500px;font-size:23.500px;font-weight:500;color:#fff;">100</span>
<span class="t" style="left:7px;top:1311.500px;font-size:23.500px;font-weight:500;color:#fff;">%</span>
<div id="canvas"></div>
<svg id="art" style="left:414px;top:118px" width="1025" height="1336" viewBox="414 118 1025 1336">
<defs>
<linearGradient id="gLP" x1="640" y1="117" x2="800" y2="875" gradientUnits="userSpaceOnUse"><stop offset="0" stop-color="#d8dddd"/><stop offset="0.250" stop-color="#ccd1d2"/><stop offset="0.550" stop-color="#b8bbbf"/><stop offset="1" stop-color="#a8abb1"/></linearGradient>
<linearGradient id="gRPf" x1="1000" y1="117" x2="1160" y2="845" gradientUnits="userSpaceOnUse"><stop offset="0" stop-color="#d6dbdb"/><stop offset="0.300" stop-color="#c7cbcc"/><stop offset="0.600" stop-color="#b5b8bd"/><stop offset="1" stop-color="#a5a8af"/></linearGradient>
<linearGradient id="gRPs" x1="0" y1="117" x2="0" y2="845" gradientUnits="userSpaceOnUse"><stop offset="0" stop-color="#9b9fa6"/><stop offset="0.400" stop-color="#8a8d96"/><stop offset="1" stop-color="#7a7d87"/></linearGradient>
<linearGradient id="gBand" x1="1150" y1="1250" x2="1290" y2="1400" gradientUnits="userSpaceOnUse"><stop offset="0" stop-color="#5a5862"/><stop offset="0.750" stop-color="#56545e"/><stop offset="1" stop-color="#2a2a2e"/></linearGradient>
<linearGradient id="gTongue" x1="672" y1="1066" x2="712" y2="1092" gradientUnits="userSpaceOnUse"><stop offset="0" stop-color="#93a7b1"/><stop offset="0.500" stop-color="#6d8089"/><stop offset="1" stop-color="#2a3336"/></linearGradient>
<filter id="b1" x="-20%" y="-20%" width="140%" height="140%"><feGaussianBlur stdDeviation="1"/></filter>
<filter id="b2" x="-30%" y="-30%" width="160%" height="160%"><feGaussianBlur stdDeviation="2"/></filter>
<filter id="b4" x="-40%" y="-40%" width="180%" height="180%"><feGaussianBlur stdDeviation="4"/></filter>
<filter id="b7" x="-50%" y="-50%" width="200%" height="200%"><feGaussianBlur stdDeviation="7"/></filter>
<clipPath id="cSockL"><path d="M744 855L845 809L848.5 864L853 890L859 916L867 946L872 962L874 972L862 1008L848 1032L826 1058L797 1083L764 1099L740 1108L739 1073L728 1050L709 1029L690 1017L709 989L734 948L746 925L749 900Z"/></clipPath>
<clipPath id="cSockR"><path d="M1079 810L1126.5 842.5L1190 792L1194 840L1204 892L1212 920L1220 947L1225 980L1228.5 1013L1232 1040L1208 1036L1186 1038L1163 1044L1142 1058L1128 1040L1118 1022L1107 988L1098 955L1092 927L1083 905L1083 863Z"/></clipPath>
<clipPath id="cShoeL"><path d="M660 1016L646 1043L632 1066L616 1078L607 1076L591 1089L576 1095L562 1102L545 1119L513 1123L490 1126L490 1126C488.7 1129.8 484.8 1141.5 482 1149C479.2 1156.5 475.9 1162.8 473 1171C470.1 1179.2 467.2 1189.2 464.5 1198C461.8 1206.8 456.9 1218.5 456.5 1224C456.1 1229.5 461.1 1229.8 462 1231L462 1231C465.8 1233.3 475.2 1240.8 484.5 1244.6C493.8 1248.3 506.9 1251.3 518 1253.5C529.1 1255.7 539.9 1257.4 551 1258C562.1 1258.6 573.3 1258.2 584.5 1257C595.7 1255.8 606.9 1253.8 618 1251C629.1 1248.2 639.9 1244.4 651 1240C662.1 1235.6 675.3 1229.4 684.6 1224.6C693.9 1219.8 701.1 1215.8 707 1211C712.9 1206.2 716.3 1200.4 720 1195.6C723.7 1190.8 726.0 1185.4 729 1182C732.0 1178.6 736.5 1176.2 738 1175L738 1175L798 1191L917 1137L912 1061L904 1060L904 1060C903.8 1057.3 903.5 1052.8 903 1044C902.5 1035.2 902.0 1017.3 901 1007C900.0 996.7 900.0 988.2 897 982C894.0 975.8 885.7 974.2 883 970C880.3 965.8 883.8 961.0 881 957C878.2 953.0 868.5 947.8 866 946L866 946L872 962L874 972L862 1008L848 1032L826 1058L797 1083L764 1099L740 1108L739 1073L728 1050L709 1029L690 1017L660 1016Z"/></clipPath>
<clipPath id="cShoeR"><path d="M1090 922C1079.7 930.3 1088.2 962.0 1088 980C1087.8 998.0 1087.3 1014.3 1089 1030C1090.7 1045.7 1092.7 1058.5 1098 1074C1103.3 1089.5 1114.7 1105.0 1121 1123C1127.3 1141.0 1130.2 1163.5 1136 1182C1141.8 1200.5 1153.8 1220.5 1156 1234C1158.2 1247.5 1150.0 1253.3 1149 1263C1148.0 1272.7 1145.3 1279.8 1150 1292C1154.7 1304.2 1164.8 1320.3 1177 1336C1189.2 1351.7 1207.5 1371.2 1223 1386C1238.5 1400.8 1255.8 1418.0 1270 1425C1284.2 1432.0 1296.3 1431.2 1308 1428C1319.7 1424.8 1332.3 1418.8 1340 1406C1347.7 1393.2 1350.3 1372.3 1354 1351C1357.7 1329.7 1362.3 1299.8 1362 1278C1361.7 1256.2 1357.2 1234.2 1352 1220C1346.8 1205.8 1337.8 1201.8 1331 1193C1324.2 1184.2 1316.3 1175.7 1311 1167C1305.7 1158.3 1302.8 1151.8 1299 1141C1295.2 1130.2 1292.2 1112.8 1288 1102C1283.8 1091.2 1278.7 1083.0 1274 1076C1269.3 1069.0 1264.0 1068.2 1260 1060C1256.0 1051.8 1254.3 1040.3 1250 1027C1245.7 1013.7 1238.7 992.0 1234 980C1229.3 968.0 1225.7 963.3 1222 955C1218.3 946.7 1224.0 934.2 1212 930C1200.0 925.8 1170.3 931.3 1150 930C1129.7 928.7 1100.3 913.7 1090 922Z"/></clipPath>
</defs>
<path d="M744 855L845 809L848.5 864L853 890L859 916L867 946L872 962L874 972L862 1008L848 1032L826 1058L797 1083L764 1099L740 1108L739 1073L728 1050L709 1029L690 1017L709 989L734 948L746 925L749 900Z" fill="#f2f2f4"/>
<g clip-path="url(#cSockL)">
<path d="M744 855L752 884L753 916L738 950L712 992L692 1020L700 1024L724 990L748 952L762 916L760 880L790 846Z" fill="#9a9aae" opacity="0.900" filter="url(#b2)"/>
<path d="M726 1046L740 1076L741 1110L790 1092L830 1058L842 1040L800 1068L764 1082L752 1064L738 1044Z" fill="#7e7e98" opacity="0.950" filter="url(#b2)"/>
<path d="M855 900L866 946L874 972L860 1008L852 1000L862 970L850 930Z" fill="#c8c8d4" opacity="0.900" filter="url(#b2)"/>
<path d="M756 886C756.2 895.2 758.7 921.9 757 941C755.3 960.1 752.8 983.3 746 1000.5C739.2 1017.7 721.0 1036.8 716 1044M766.75 877.5C766.9 886.7 768.3 908.2 767.75 932.5C767.2 956.8 767.9 995.7 763.625 1023.25C759.3 1050.8 745.6 1085.5 742 1098M777.5 869C777.7 878.2 778.0 899.5 778.5 924C779.0 948.5 782.3 988.0 780.25 1016C778.2 1044.0 768.4 1079.3 766 1092M788.25 860.5C788.4 869.7 787.2 891.6 789.25 915.5C791.3 939.4 799.1 977.0 800.375 1003.75C801.7 1030.5 797.6 1064.0 797 1076M799 852C799.2 861.2 797.2 883.9 800 907C802.8 930.1 812.5 965.3 815.5 990.5C818.5 1015.7 817.6 1046.8 818 1058M809.75 843.5C809.9 852.7 807.5 876.2 810.75 898.5C814.0 920.8 824.9 953.7 829.125 977.25C833.3 1000.8 834.9 1029.5 836 1040M820.5 835C820.7 844.2 818.1 868.7 821.5 890C824.9 911.3 836.0 941.3 840.75 963C845.5 984.7 848.5 1010.5 850 1020M831.25 826.5C831.4 835.7 829.1 861.1 832.25 881.5C835.4 901.9 845.8 929.0 850.375 948.75C855.0 968.5 858.4 991.5 860 1000M842 818C842.2 827.2 840.2 853.8 843 873C845.8 892.2 854.8 916.0 859 933.5C863.2 951.0 866.5 970.6 868 978" fill="none" stroke="#9b9ba8" stroke-width="3.400" stroke-linecap="round" opacity="0.900" filter="url(#b1)"/>
<path d="M744 855L842 811L760 884L752 890Z" fill="#6d6e86"/>
</g>
<path d="M744 855L845 809L848.5 864L853 890L859 916L867 946L872 962L874 972L862 1008L848 1032L826 1058L797 1083L764 1099L740 1108L739 1073L728 1050L709 1029L690 1017L709 989L734 948L746 925L749 900Z" fill="none" stroke="#121212" stroke-width="3" stroke-linejoin="round"/>
<path d="M835 848L841 872L846 890L838 925" fill="none" stroke="#4a4a55" stroke-width="1.600"/>
<path d="M846 893L836 915L840 900Z" fill="#b7b7c6" stroke="#8c8c9c" stroke-width="1"/>
<path d="M604 112C604.3 116.7 605.3 132.7 606 140C606.7 147.3 605.7 149.2 608 156C610.3 162.8 618.2 172.8 620 181C621.8 189.2 619.3 196.5 619 205C618.7 213.5 616.3 222.7 618 232C619.7 241.3 625.5 253.8 629 261C632.5 268.2 635.7 266.8 639 275C642.3 283.2 645.9 295.8 649 310C652.1 324.2 654.7 343.3 657.5 360C660.3 376.7 663.5 391.7 666 410C668.5 428.3 670.8 449.7 672.5 470C674.2 490.3 675.1 511.2 676 532C676.9 552.8 677.7 572.0 678 595C678.3 618.0 678.3 647.2 678 670C677.7 692.8 676.9 713.3 676 732C675.1 750.7 673.5 765.7 672.5 782C671.5 798.3 670.9 814.8 670 830C669.1 845.2 667.5 865.8 667 873L682 875L744 854L844 808L882 791L880 790C879.2 774.2 876.7 723.3 875 695C873.3 666.7 871.7 645.0 870 620C868.3 595.0 866.8 570.0 865 545C863.2 520.0 861.7 496.7 859 470C856.3 443.3 852.2 411.7 849 385C845.8 358.3 843.2 335.0 840 310C836.8 285.0 833.3 258.0 830 235C826.7 212.0 822.9 188.3 820 172C817.1 155.7 813.3 147.0 812.5 137C811.7 127.0 814.6 116.2 815 112Z" fill="url(#gLP)" stroke="#121212" stroke-width="3.600" stroke-linejoin="round"/>
<path d="M660 1016L646 1043L632 1066L616 1078L607 1076L591 1089L576 1095L562 1102L545 1119L513 1123L490 1126L490 1126C488.7 1129.8 484.8 1141.5 482 1149C479.2 1156.5 475.9 1162.8 473 1171C470.1 1179.2 467.2 1189.2 464.5 1198C461.8 1206.8 456.9 1218.5 456.5 1224C456.1 1229.5 461.1 1229.8 462 1231L462 1231C465.8 1233.3 475.2 1240.8 484.5 1244.6C493.8 1248.3 506.9 1251.3 518 1253.5C529.1 1255.7 539.9 1257.4 551 1258C562.1 1258.6 573.3 1258.2 584.5 1257C595.7 1255.8 606.9 1253.8 618 1251C629.1 1248.2 639.9 1244.4 651 1240C662.1 1235.6 675.3 1229.4 684.6 1224.6C693.9 1219.8 701.1 1215.8 707 1211C712.9 1206.2 716.3 1200.4 720 1195.6C723.7 1190.8 726.0 1185.4 729 1182C732.0 1178.6 736.5 1176.2 738 1175L738 1175L798 1191L917 1137L912 1061L904 1060L904 1060C903.8 1057.3 903.5 1052.8 903 1044C902.5 1035.2 902.0 1017.3 901 1007C900.0 996.7 900.0 988.2 897 982C894.0 975.8 885.7 974.2 883 970C880.3 965.8 883.8 961.0 881 957C878.2 953.0 868.5 947.8 866 946L866 946L872 962L874 972L862 1008L848 1032L826 1058L797 1083L764 1099L740 1108L739 1073L728 1050L709 1029L690 1017L660 1016Z" fill="#1b1e1e"/>
<g clip-path="url(#cShoeL)">
<path d="M456 1204Q470 1214 506 1224Q551 1230 596 1227Q640 1216 685 1198Q718 1180 738 1164L800 1140L904 1086L920 1140L800 1196L738 1180L700 1220L600 1262L480 1250L450 1230Z" fill="#141616"/>
<path d="M470 1190Q520 1208 596 1208Q660 1198 730 1150" fill="none" stroke="#3a4040" stroke-width="9" opacity="0.700" filter="url(#b4)"/>
<path d="M508 1146Q540 1158 600 1162Q640 1162 668 1150L664 1162Q630 1172 596 1172Q540 1170 506 1156Z" fill="#8fa0a4" opacity="0.850" filter="url(#b2)"/>
<path d="M516 1152Q536 1158 560 1158" fill="none" stroke="#dfe8ea" stroke-width="4" opacity="0.700" filter="url(#b2)"/>
<path d="M570 1120Q600 1130 640 1150" fill="none" stroke="#4f5a5c" stroke-width="14" opacity="0.600" filter="url(#b7)"/>
<path d="M604 1186L616 1184L613 1250L603 1252Z" fill="#b9c6ca" opacity="0.600" filter="url(#b2)"/>
<path d="M575 1190L600 1190L596 1252L572 1252Z" fill="#566064" opacity="0.600" filter="url(#b4)"/>
<path d="M620 1190L640 1186L636 1245L620 1250Z" fill="#485256" opacity="0.500" filter="url(#b4)"/>
<path d="M686 1040L720 1066L694 1116L658 1095Z" fill="url(#gTongue)" opacity="0.900" filter="url(#b2)"/>
<path d="M691 1049L673 1081" fill="none" stroke="#d3dde2" stroke-width="5.500" opacity="0.850" filter="url(#b2)" stroke-linecap="round"/>
<path d="M700 1120L716 1092L726 1100L710 1128Z" fill="#73868e" opacity="0.600" filter="url(#b2)"/>
<path d="M650 1040L668 1030L640 1084L628 1080Z" fill="#34343e" opacity="0.900" filter="url(#b2)"/>
<path d="M760 1120Q820 1090 870 1030" fill="none" stroke="#39403f" stroke-width="16" opacity="0.600" filter="url(#b7)"/>
<path d="M884 1000L897 1004L898 1084L887 1088Z" fill="#8fa1a8" opacity="0.750" filter="url(#b4)"/>
<path d="M889 1020L895 1022L895 1060L890 1062Z" fill="#c9d5da" opacity="0.600" filter="url(#b2)"/>
<path d="M888 1100L902 1094L904 1136L892 1140Z" fill="#aebcc2" opacity="0.800" filter="url(#b2)"/>
<path d="M800 1125L880 1084" fill="none" stroke="#5c6666" stroke-width="5" opacity="0.700" filter="url(#b2)"/>
<path d="M738 1176L763 1157L798 1190Z" fill="#2e3232"/>
</g>
<path d="M660 1016L646 1043L632 1066L616 1078L607 1076L591 1089L576 1095L562 1102L545 1119L513 1123L490 1126L490 1126C488.7 1129.8 484.8 1141.5 482 1149C479.2 1156.5 475.9 1162.8 473 1171C470.1 1179.2 467.2 1189.2 464.5 1198C461.8 1206.8 456.9 1218.5 456.5 1224C456.1 1229.5 461.1 1229.8 462 1231L462 1231C465.8 1233.3 475.2 1240.8 484.5 1244.6C493.8 1248.3 506.9 1251.3 518 1253.5C529.1 1255.7 539.9 1257.4 551 1258C562.1 1258.6 573.3 1258.2 584.5 1257C595.7 1255.8 606.9 1253.8 618 1251C629.1 1248.2 639.9 1244.4 651 1240C662.1 1235.6 675.3 1229.4 684.6 1224.6C693.9 1219.8 701.1 1215.8 707 1211C712.9 1206.2 716.3 1200.4 720 1195.6C723.7 1190.8 726.0 1185.4 729 1182C732.0 1178.6 736.5 1176.2 738 1175L738 1175L798 1191L917 1137L912 1061L904 1060L904 1060C903.8 1057.3 903.5 1052.8 903 1044C902.5 1035.2 902.0 1017.3 901 1007C900.0 996.7 900.0 988.2 897 982C894.0 975.8 885.7 974.2 883 970C880.3 965.8 883.8 961.0 881 957C878.2 953.0 868.5 947.8 866 946L866 946L872 962L874 972L862 1008L848 1032L826 1058L797 1083L764 1099L740 1108L739 1073L728 1050L709 1029L690 1017L660 1016Z" fill="none" stroke="#0e0e0e" stroke-width="3.200" stroke-linejoin="round"/>
<path d="M460 1204.500Q473 1216 507 1224.600Q551 1229 596 1227Q640 1216 685 1198Q718 1180 738 1164.500L803 1131L845 1106L886 1077L904 1060" fill="none" stroke="#050505" stroke-width="2.500"/>
<path d="M763 1157L798 1190" fill="none" stroke="#070707" stroke-width="2"/>
<path d="M496.700 1132Q494 1146 506.700 1157.800Q529 1167 562 1172.300Q596 1175 618 1173.400Q628 1172 636 1168" fill="none" stroke="#0a0a0a" stroke-width="6"/>
<path d="M496.700 1131Q494 1145 506.700 1156.300Q529 1165.500 562 1170.800Q596 1173.500 618 1172Q628 1170.500 636 1167" fill="none" stroke="#9aa3a3" stroke-width="2.600"/>
<path d="M652 1176Q700 1160 738 1120" fill="none" stroke="#0a0a0a" stroke-width="5"/>
<path d="M652 1175Q700 1159 737 1119" fill="none" stroke="#6f7877" stroke-width="2.200"/>
<path d="M738 1110C742.4 1108.2 754.7 1104.0 764.6 1099.5C774.5 1095.0 787.3 1089.9 797.6 1083C807.9 1076.1 818.1 1066.6 826.5 1058.2C834.9 1049.8 842.2 1040.8 848.2 1032.5C854.2 1024.2 858.5 1017.0 862.6 1008.7C866.7 1000.5 870.9 990.5 873 983C875.1 975.5 874.7 967.2 875 964" fill="none" stroke="#0c0c0c" stroke-width="11" stroke-linecap="round"/>
<path d="M738 1110C742.4 1108.2 754.7 1104.0 764.6 1099.5C774.5 1095.0 787.3 1089.9 797.6 1083C807.9 1076.1 818.1 1066.6 826.5 1058.2C834.9 1049.8 842.2 1040.8 848.2 1032.5C854.2 1024.2 858.5 1017.0 862.6 1008.7C866.7 1000.5 870.9 990.5 873 983C875.1 975.5 874.7 967.2 875 964" fill="none" stroke="#767b77" stroke-width="6" stroke-linecap="round"/>
<path d="M664 1020C666.7 1020.2 673.0 1018.4 680 1021C687.0 1023.6 698.4 1030.0 705.8 1035.5C713.2 1041.0 719.3 1047.5 724.4 1054C729.5 1060.5 733.9 1068.3 736.2 1074.7C738.5 1081.1 739.3 1085.4 738.3 1092.3C737.3 1099.2 734.4 1108.9 730 1116C725.6 1123.1 717.5 1129.7 712 1135C706.5 1140.3 699.5 1145.8 697 1148" fill="none" stroke="#0c0c0c" stroke-width="11" stroke-linecap="round"/>
<path d="M664 1020C666.7 1020.2 673.0 1018.4 680 1021C687.0 1023.6 698.4 1030.0 705.8 1035.5C713.2 1041.0 719.3 1047.5 724.4 1054C729.5 1060.5 733.9 1068.3 736.2 1074.7C738.5 1081.1 739.3 1085.4 738.3 1092.3C737.3 1099.2 734.4 1108.9 730 1116C725.6 1123.1 717.5 1129.7 712 1135C706.5 1140.3 699.5 1145.8 697 1148" fill="none" stroke="#7a7f7c" stroke-width="6" stroke-linecap="round"/>
<path d="M562.5 1103L576 1094.5L591 1089L607 1076L616 1078L640 1096L662.4 1113.4L684.6 1137.8L694.6 1153.4L673.5 1164.5L644.6 1175.6L635.7 1169L606.8 1142.3L582.3 1117.8Z" fill="#8d8984" stroke="#121212" stroke-width="2.600" stroke-linejoin="round"/>
<path d="M604 1084L616 1084L664 1120L686 1148L672 1154L640 1118Z" fill="#b5b0aa" opacity="0.750" filter="url(#b2)"/>
<path d="M596 1091L629 1126.700Q632 1134 637 1135.600L648 1131Q648 1124 633.500 1111L612 1090" fill="none" stroke="#1a1a1a" stroke-width="1.800" stroke-linejoin="round"/>
<path d="M575 1100L640 1163L648 1168L688 1152M610 1082L662 1120L686 1150" fill="none" stroke="#2c2c2c" stroke-width="1.200"/>
<path d="M1090 922C1079.7 930.3 1088.2 962.0 1088 980C1087.8 998.0 1087.3 1014.3 1089 1030C1090.7 1045.7 1092.7 1058.5 1098 1074C1103.3 1089.5 1114.7 1105.0 1121 1123C1127.3 1141.0 1130.2 1163.5 1136 1182C1141.8 1200.5 1153.8 1220.5 1156 1234C1158.2 1247.5 1150.0 1253.3 1149 1263C1148.0 1272.7 1145.3 1279.8 1150 1292C1154.7 1304.2 1164.8 1320.3 1177 1336C1189.2 1351.7 1207.5 1371.2 1223 1386C1238.5 1400.8 1255.8 1418.0 1270 1425C1284.2 1432.0 1296.3 1431.2 1308 1428C1319.7 1424.8 1332.3 1418.8 1340 1406C1347.7 1393.2 1350.3 1372.3 1354 1351C1357.7 1329.7 1362.3 1299.8 1362 1278C1361.7 1256.2 1357.2 1234.2 1352 1220C1346.8 1205.8 1337.8 1201.8 1331 1193C1324.2 1184.2 1316.3 1175.7 1311 1167C1305.7 1158.3 1302.8 1151.8 1299 1141C1295.2 1130.2 1292.2 1112.8 1288 1102C1283.8 1091.2 1278.7 1083.0 1274 1076C1269.3 1069.0 1264.0 1068.2 1260 1060C1256.0 1051.8 1254.3 1040.3 1250 1027C1245.7 1013.7 1238.7 992.0 1234 980C1229.3 968.0 1225.7 963.3 1222 955C1218.3 946.7 1224.0 934.2 1212 930C1200.0 925.8 1170.3 931.3 1150 930C1129.7 928.7 1100.3 913.7 1090 922Z" fill="#1a1d1d"/>
<g clip-path="url(#cShoeR)">
<path d="M1153 1250C1154.2 1256.3 1153.2 1274.0 1160 1288C1166.8 1302.0 1180.0 1318.8 1194 1334C1208.0 1349.2 1229.3 1368.2 1244 1379C1258.7 1389.8 1275.7 1395.7 1282 1399" fill="none" stroke="url(#gBand)" stroke-width="10" stroke-linecap="round"/>
<path d="M1156 1256C1157.2 1261.0 1156.2 1273.5 1163 1286C1169.8 1298.5 1183.2 1316.2 1197 1331C1210.8 1345.8 1237.8 1367.7 1246 1375" fill="none" stroke="#6b6973" stroke-width="3" opacity="0.700" filter="url(#b1)"/>
<path d="M1106 1096L1121 1123L1136 1182L1156 1234L1164 1230L1147 1182L1138 1140L1118 1096Z" fill="#4c4a58"/>
<path d="M1098 930L1096 1000L1104 1060L1124 1108M1106 960L1106 1010L1116 1060L1132 1096" fill="none" stroke="#4a4f4f" stroke-width="2.500"/>
<path d="M1346 1240L1355 1244L1353 1330L1342 1350Z" fill="#8c9da2" opacity="0.650" filter="url(#b2)"/>
<path d="M1300 1150Q1340 1200 1346 1260Q1346 1330 1320 1392" fill="none" stroke="#343a3a" stroke-width="10" opacity="0.800" filter="url(#b2)"/>
</g>
<path d="M1222 955L1233.500 997L1255 1063" fill="none" stroke="#5a605e" stroke-width="2.500"/>
<path d="M1166 1232C1166.3 1233.2 1165.6 1231.4 1167.7 1239C1169.8 1246.6 1171.8 1264.8 1178.4 1277.8C1185.1 1290.8 1196.2 1305.1 1207.6 1316.8C1218.9 1328.5 1234.4 1340.0 1246.5 1347.9C1258.6 1355.8 1272.4 1361.0 1280 1364C1287.6 1367.0 1288.7 1367.3 1292 1366C1295.3 1364.7 1296.2 1362.6 1300 1356C1303.8 1349.4 1310.5 1339.5 1314.6 1326.5C1318.6 1313.5 1323.0 1292.4 1324.3 1277.8C1325.6 1263.2 1324.0 1250.3 1322.4 1239C1320.8 1227.7 1317.7 1218.2 1314.6 1209.7C1311.5 1201.2 1305.8 1191.6 1304 1188" fill="none" stroke="#0b0b0b" stroke-width="7"/>
<path d="M1166 1232C1166.3 1233.2 1165.6 1231.4 1167.7 1239C1169.8 1246.6 1171.8 1264.8 1178.4 1277.8C1185.1 1290.8 1196.2 1305.1 1207.6 1316.8C1218.9 1328.5 1234.4 1340.0 1246.5 1347.9C1258.6 1355.8 1272.4 1361.0 1280 1364C1287.6 1367.0 1288.7 1367.3 1292 1366C1295.3 1364.7 1296.2 1362.6 1300 1356C1303.8 1349.4 1310.5 1339.5 1314.6 1326.5C1318.6 1313.5 1323.0 1292.4 1324.3 1277.8C1325.6 1263.2 1324.0 1250.3 1322.4 1239C1320.8 1227.7 1317.7 1218.2 1314.6 1209.7C1311.5 1201.2 1305.8 1191.6 1304 1188" fill="none" stroke="#7e8582" stroke-width="3.200"/>
<path d="M1158 1244C1159.3 1250.3 1159.0 1268.0 1166 1282C1173.0 1296.0 1186.0 1313.0 1200 1328C1214.0 1343.0 1235.3 1361.3 1250 1372C1264.7 1382.7 1279.7 1388.3 1288 1392C1296.3 1395.7 1293.7 1396.8 1300 1394C1306.3 1391.2 1319.7 1387.9 1326 1375C1332.3 1362.1 1335.7 1336.3 1338 1316.8C1340.3 1297.3 1341.0 1275.8 1340 1258C1339.0 1240.2 1335.7 1222.0 1332 1209.7C1328.3 1197.4 1320.3 1188.3 1318 1184" fill="none" stroke="#0a0a0a" stroke-width="4"/>
<path d="M1158 1244C1159.3 1250.3 1159.0 1268.0 1166 1282C1173.0 1296.0 1186.0 1313.0 1200 1328C1214.0 1343.0 1235.3 1361.3 1250 1372C1264.7 1382.7 1279.7 1388.3 1288 1392C1296.3 1395.7 1293.7 1396.8 1300 1394C1306.3 1391.2 1319.7 1387.9 1326 1375C1332.3 1362.1 1335.7 1336.3 1338 1316.8C1340.3 1297.3 1341.0 1275.8 1340 1258C1339.0 1240.2 1335.7 1222.0 1332 1209.7C1328.3 1197.4 1320.3 1188.3 1318 1184" fill="none" stroke="#4a504e" stroke-width="2.400"/>
<path d="M1090 922C1079.7 930.3 1088.2 962.0 1088 980C1087.8 998.0 1087.3 1014.3 1089 1030C1090.7 1045.7 1092.7 1058.5 1098 1074C1103.3 1089.5 1114.7 1105.0 1121 1123C1127.3 1141.0 1130.2 1163.5 1136 1182C1141.8 1200.5 1153.8 1220.5 1156 1234C1158.2 1247.5 1150.0 1253.3 1149 1263C1148.0 1272.7 1145.3 1279.8 1150 1292C1154.7 1304.2 1164.8 1320.3 1177 1336C1189.2 1351.7 1207.5 1371.2 1223 1386C1238.5 1400.8 1255.8 1418.0 1270 1425C1284.2 1432.0 1296.3 1431.2 1308 1428C1319.7 1424.8 1332.3 1418.8 1340 1406C1347.7 1393.2 1350.3 1372.3 1354 1351C1357.7 1329.7 1362.3 1299.8 1362 1278C1361.7 1256.2 1357.2 1234.2 1352 1220C1346.8 1205.8 1337.8 1201.8 1331 1193C1324.2 1184.2 1316.3 1175.7 1311 1167C1305.7 1158.3 1302.8 1151.8 1299 1141C1295.2 1130.2 1292.2 1112.8 1288 1102C1283.8 1091.2 1278.7 1083.0 1274 1076C1269.3 1069.0 1264.0 1068.2 1260 1060C1256.0 1051.8 1254.3 1040.3 1250 1027C1245.7 1013.7 1238.7 992.0 1234 980C1229.3 968.0 1225.7 963.3 1222 955C1218.3 946.7 1224.0 934.2 1212 930C1200.0 925.8 1170.3 931.3 1150 930C1129.7 928.7 1100.3 913.7 1090 922Z" fill="none" stroke="#0e0e0e" stroke-width="3.200" stroke-linejoin="round"/>
<path d="M1079 810L1126.5 842.5L1190 792L1194 840L1204 892L1212 920L1220 947L1225 980L1228.5 1013L1232 1040L1208 1036L1186 1038L1163 1044L1142 1058L1128 1040L1118 1022L1107 988L1098 955L1092 927L1083 905L1083 863Z" fill="#f2f2f4"/>
<g clip-path="url(#cSockR)">
<path d="M1083 830L1087 905L1094 957L1098 1004L1118 1040L1130 1036L1112 1000L1106 950L1098 900L1096 836Z" fill="#b4b4c4" opacity="0.900" filter="url(#b2)"/>
<path d="M1096 950L1106 990L1118 1024L1142 1060L1164 1046L1186 1040L1232 1042L1230 1028L1184 1028L1160 1034L1144 1044L1130 1020L1118 986L1106 948Z" fill="#8f8fa6" opacity="0.950" filter="url(#b1)"/>
<path d="M1190 800L1196 850L1208 900L1222 950L1244 1010L1236 1020L1214 960L1198 900L1186 850Z" fill="#c4c4d2" opacity="0.900" filter="url(#b2)"/>
<path d="M1092 835Q1095 905 1100 933T1124 1030M1102 842Q1105 912 1112 944T1136 1045M1113 850Q1116 920 1124 950T1147 1050M1123 857Q1126 927 1136 949T1159 1042M1134 852Q1137 922 1148 943T1170 1034M1144 843Q1147 913 1161 939T1182 1034M1155 835Q1158 905 1173 935T1193 1034M1165 827Q1168 897 1185 930T1205 1034M1176 818Q1179 888 1197 926T1216 1034M1186 810Q1189 880 1209 922T1228 1034" fill="none" stroke="#9b9ba8" stroke-width="3.400" stroke-linecap="round" opacity="0.900" filter="url(#b1)"/>
<path d="M1078 808L1126 843L1191 791L1192 801L1128 853L1080 820Z" fill="#6d6e86"/>
</g>
<path d="M1079 810L1126.5 842.5L1190 792L1194 840L1204 892L1212 920L1220 947L1225 980L1228.5 1013L1232 1040L1208 1036L1186 1038L1163 1044L1142 1058L1128 1040L1118 1022L1107 988L1098 955L1092 927L1083 905L1083 863Z" fill="none" stroke="#121212" stroke-width="3" stroke-linejoin="round"/>
<path d="M1124 1124C1125.0 1120.7 1126.8 1111.7 1130 1104C1133.2 1096.3 1137.3 1086.0 1143 1078C1148.7 1070.0 1156.8 1061.8 1164 1056C1171.2 1050.2 1178.7 1045.7 1186 1043C1193.3 1040.3 1200.7 1039.8 1208 1040C1215.3 1040.2 1222.7 1041.0 1230 1044C1237.3 1047.0 1245.7 1053.0 1252 1058C1258.3 1063.0 1263.2 1067.3 1268 1074C1272.8 1080.7 1278.8 1094.0 1281 1098L1276 1112C1271.7 1115.8 1262.7 1128.7 1250 1135C1237.3 1141.3 1217.2 1148.5 1200 1150C1182.8 1151.5 1159.7 1148.3 1147 1144C1134.3 1139.7 1127.8 1127.3 1124 1124Z" fill="#1b1f1e" stroke="#0e0e0e" stroke-width="2.500" stroke-linejoin="round"/>
<path d="M1124 1124C1125.0 1120.7 1126.8 1111.7 1130 1104C1133.2 1096.3 1137.3 1086.0 1143 1078C1148.7 1070.0 1156.8 1061.8 1164 1056C1171.2 1050.2 1178.7 1045.7 1186 1043C1193.3 1040.3 1200.7 1039.8 1208 1040C1215.3 1040.2 1222.7 1041.0 1230 1044C1237.3 1047.0 1245.7 1053.0 1252 1058C1258.3 1063.0 1263.2 1067.3 1268 1074C1272.8 1080.7 1278.8 1094.0 1281 1098" fill="none" stroke="#0c0c0c" stroke-width="9.500" stroke-linejoin="round"/>
<path d="M1124 1124C1125.0 1120.7 1126.8 1111.7 1130 1104C1133.2 1096.3 1137.3 1086.0 1143 1078C1148.7 1070.0 1156.8 1061.8 1164 1056C1171.2 1050.2 1178.7 1045.7 1186 1043C1193.3 1040.3 1200.7 1039.8 1208 1040C1215.3 1040.2 1222.7 1041.0 1230 1044C1237.3 1047.0 1245.7 1053.0 1252 1058C1258.3 1063.0 1263.2 1067.3 1268 1074C1272.8 1080.7 1278.8 1094.0 1281 1098" fill="none" stroke="#737976" stroke-width="4.800" stroke-linejoin="round"/>
<path d="M1186 1052L1206 1052L1230 1142L1206 1148Z" fill="#7c9199" opacity="0.850" filter="url(#b4)"/>
<path d="M1194 1054L1203 1054L1224 1140L1214 1142Z" fill="#d5dfe4" opacity="0.800" filter="url(#b2)"/>
<path d="M1158 1084L1180 1066L1190 1140L1166 1140Z" fill="#59686c" opacity="0.700" filter="url(#b4)"/>
<path d="M1236 1060L1262 1082L1270 1108L1250 1126Z" fill="#2e3a38" opacity="0.700" filter="url(#b4)"/>
<path d="M1194 1215L1210 1212L1242 1292L1228 1298Z" fill="#8fa0a6" opacity="0.800" filter="url(#b4)"/>
<path d="M1202 1222L1209 1220L1228 1270L1221 1272Z" fill="#e4ecef" opacity="0.850" filter="url(#b2)"/>
<path d="M1262 1342L1284 1354L1279 1363L1258 1351Z" fill="#dfe8ea" opacity="0.850" filter="url(#b2)"/>
<path d="M1240 1215Q1300 1260 1300 1350" fill="none" stroke="#27302e" stroke-width="26" opacity="0.700" filter="url(#b7)"/>
<path d="M1123 1126C1124.8 1119.7 1134.2 1140.0 1147 1144C1159.8 1148.0 1182.8 1151.5 1200 1150C1217.2 1148.5 1237.3 1141.3 1250 1135C1262.7 1128.7 1270.7 1118.3 1276 1112C1281.3 1105.7 1278.2 1092.2 1282 1097C1285.8 1101.8 1294.0 1129.8 1299 1141C1304.0 1152.2 1312.0 1158.2 1312 1164C1312.0 1169.8 1307.0 1170.7 1299 1176C1291.0 1181.3 1278.5 1190.2 1264 1196C1249.5 1201.8 1228.5 1210.0 1212 1211C1195.5 1212.0 1177.7 1206.8 1165 1202C1152.3 1197.2 1143.0 1194.7 1136 1182C1129.0 1169.3 1121.2 1132.3 1123 1126Z" fill="#87837f" stroke="#121212" stroke-width="2.500" stroke-linejoin="round"/>
<path d="M1124 1128L1147 1145L1166 1201L1137 1181Z" fill="#5c5a68"/>
<path d="M1180 1170Q1170 1178 1178 1186Q1186 1192 1200 1190L1250 1176Q1276 1164 1280 1150Q1280 1140 1274 1142" fill="none" stroke="#161616" stroke-width="2.200"/>
<path d="M1188 1176L1240 1166L1268 1150M1150 1150L1200 1158L1252 1144L1280 1118M1170 1196L1214 1203L1262 1188L1300 1166" fill="none" stroke="#222" stroke-width="1.300"/>
<path d="M1206 1166L1250 1155L1274 1136" fill="none" stroke="#b3afa9" stroke-width="6" opacity="0.700" filter="url(#b2)"/>
<path d="M915 112C914.8 117.8 912.3 138.2 914 147C915.7 155.8 920.3 157.5 925 165C929.7 172.5 937.0 183.3 942 192C947.0 200.7 951.7 205.7 955 217C958.3 228.3 959.2 240.3 962 260C964.8 279.7 968.7 310.0 972 335C975.3 360.0 978.8 387.5 982 410C985.2 432.5 987.2 445.5 991 470C994.8 494.5 1000.7 525.8 1005 557C1009.3 588.2 1013.2 620.7 1017 657C1020.8 693.3 1025.8 755.3 1027.5 775L1077 808L1080 817L1126.5 842.5L1126.5 842.5C1124.9 840.6 1121.4 845.2 1117 831C1112.6 816.8 1105.3 783.8 1100 757C1094.7 730.2 1090.8 703.3 1085 670C1079.2 636.7 1070.8 590.3 1065 557C1059.2 523.7 1054.2 494.5 1050 470C1045.8 445.5 1044.2 432.5 1040 410C1035.8 387.5 1030.0 358.0 1025 335C1020.0 312.0 1015.0 295.0 1010 272C1005.0 249.0 1000.0 220.3 995 197C990.0 173.7 983.8 146.2 980 132C976.2 117.8 973.8 115.3 972.5 112Z" fill="url(#gRPs)"/>
<path d="M972.5 112C973.8 115.3 976.2 117.8 980 132C983.8 146.2 990.0 173.7 995 197C1000.0 220.3 1005.0 249.0 1010 272C1015.0 295.0 1020.0 312.0 1025 335C1030.0 358.0 1035.8 387.5 1040 410C1044.2 432.5 1045.8 445.5 1050 470C1054.2 494.5 1059.2 523.7 1065 557C1070.8 590.3 1079.2 636.7 1085 670C1090.8 703.3 1094.7 730.2 1100 757C1105.3 783.8 1112.6 816.8 1117 831C1121.4 845.2 1124.9 840.6 1126.5 842.5L1190 791L1234 747L1234 746C1231.7 731.2 1224.8 688.5 1220 657C1215.2 625.5 1209.6 588.2 1205 557C1200.4 525.8 1197.5 498.7 1192.5 470C1187.5 441.3 1180.0 411.7 1175 385C1170.0 358.3 1166.7 334.2 1162.5 310C1158.3 285.8 1154.2 260.0 1150 240C1145.8 220.0 1141.7 205.5 1137.5 190C1133.3 174.5 1128.9 156.7 1125 147C1121.1 137.3 1116.1 137.8 1114 132C1111.9 126.2 1112.8 115.3 1112.5 112Z" fill="url(#gRPf)"/>
<path d="M914 147C915.8 150.0 920.3 157.5 925 165C929.7 172.5 937.0 183.3 942 192C947.0 200.7 951.7 205.7 955 217C958.3 228.3 959.2 240.3 962 260C964.8 279.7 968.7 310.0 972 335C975.3 360.0 978.8 387.5 982 410C985.2 432.5 987.2 445.5 991 470C994.8 494.5 1000.7 525.8 1005 557C1009.3 588.2 1013.2 620.7 1017 657C1020.8 693.3 1025.8 755.3 1027.5 775L1077 808L1080 817L1126.5 842.5L1190 791L1234 747L1234 746C1231.7 731.2 1224.8 688.5 1220 657C1215.2 625.5 1209.6 588.2 1205 557C1200.4 525.8 1197.5 498.7 1192.5 470C1187.5 441.3 1180.0 411.7 1175 385C1170.0 358.3 1166.7 334.2 1162.5 310C1158.3 285.8 1154.2 260.0 1150 240C1145.8 220.0 1141.7 205.5 1137.5 190C1133.3 174.5 1128.9 156.7 1125 147C1121.1 137.3 1116.1 137.8 1114 132C1111.9 126.2 1112.8 115.3 1112.5 112" fill="none" stroke="#121212" stroke-width="3.600" stroke-linejoin="round"/>
<path d="M972.5 112C973.8 115.3 976.2 117.8 980 132C983.8 146.2 990.0 173.7 995 197C1000.0 220.3 1005.0 249.0 1010 272C1015.0 295.0 1020.0 312.0 1025 335C1030.0 358.0 1035.8 387.5 1040 410C1044.2 432.5 1045.8 445.5 1050 470C1054.2 494.5 1059.2 523.7 1065 557C1070.8 590.3 1079.2 636.7 1085 670C1090.8 703.3 1094.7 730.2 1100 757C1105.3 783.8 1112.6 816.8 1117 831C1121.4 845.2 1124.9 840.6 1126.5 842.5" fill="none" stroke="#2a2a2e" stroke-width="1.300"/>
<path d="M972 118L984 118L982 126L988 132L980 140Z" fill="#8f939a"/>
</svg>
<!-- small floating palette -->
<div style="left:1359px;top:62px;width:90px;height:96px;background:#383838;box-shadow:-2px 8px 18px 1px rgba(0,0,0,0.500);"></div>
<div style="left:1371px;top:99px;width:80px;height:47px;background:#656565;border:1px solid #8a8a8a;border-radius:5px;"></div>
<div style="left:1369px;top:147px;width:80px;height:10px;background:#484848;"></div>
<svg style="left:1370px;top:66px" width="69" height="90" viewBox="1370 66 69 90">
<path d="M1374 75H1392M1374 81H1392M1374 87H1392" stroke="#6e6e6e" stroke-width="1.600" fill="none"/>
<path d="M1407 73L1421 87M1421 73L1407 87" stroke="#c4c4c4" stroke-width="2" fill="none"/>
<path d="M1435 86H1445" stroke="#c4c4c4" stroke-width="2" fill="none"/>
<rect x="1381" y="110" width="27" height="24" rx="4" fill="none" stroke="#c4c4c4" stroke-width="2"/>
<path d="M1422 118.500L1433 108L1444 118.500M1422 126L1433 136.500L1444 126" stroke="#c4c4c4" stroke-width="2" fill="none"/>
</svg>
<!-- sub view palette -->
<div style="left:1307px;top:156px;width:150px;height:937px;background:#383838;box-shadow:-2px 14px 30px 2px rgba(0,0,0,0.550);"></div>
<div style="left:1316px;top:192px;width:130px;height:790px;background:#2e2e2e;"></div>
<div style="left:1318px;top:263px;width:130px;height:645px;background:#fff;"></div>
<div style="left:1316px;top:982px;width:130px;height:102px;background:#4d4d4d;"></div>
<svg style="left:1316px;top:160px" width="123" height="930" viewBox="1316 160 123 930">
<path d="M1322 169H1340M1322 175H1340M1322 181H1340" stroke="#6e6e6e" stroke-width="1.600" fill="none"/>
<path d="M1354 168L1368 182M1368 168L1354 182" stroke="#c4c4c4" stroke-width="2" fill="none"/>
<path d="M1382 181H1400" stroke="#c4c4c4" stroke-width="2" fill="none"/>
<circle cx="1319.500" cy="360" r="2.500" fill="#6a6a86"/>
<text x="1384" y="815" font-family="Liberation Serif, serif" font-style="italic" font-size="17" fill="#ececf2" transform="rotate(-18 1384 815)">@tama</text>
<!-- sliders -->
<rect x="1326.500" y="996.500" width="120" height="23" fill="#3a3a3a" stroke="#8a8a8a" stroke-width="1"/>
<path d="M1327 1019L1327 1010Q1390 1006 1440 996L1440 1019Z" fill="#2e2e2e"/>
<rect x="1416.500" y="988.500" width="7" height="38" fill="#6e6e6e" stroke="#8c8c8c" stroke-width="1"/>
<rect x="1326.500" y="1044.500" width="120" height="23" fill="#4d4d4d" stroke="#8a8a8a" stroke-width="1"/>
<path d="M1327 1045H1336Q1330 1052 1327 1062Z" fill="#2e2e2e"/>
<path d="M1396 1050Q1380 1065 1352 1067H1396Z" fill="#2e2e2e"/>
<path d="M1404 1067V1056Q1412 1046 1424 1045H1446V1067Z" fill="#2e2e2e"/>
<rect x="1396.500" y="1036.500" width="7" height="38" fill="#6e6e6e" stroke="#8c8c8c" stroke-width="1"/>
<text x="1328" y="1018" font-family="Liberation Sans, sans-serif" font-size="22" fill="#e6e6e6">165.5</text>
<text x="1333" y="1066" font-family="Liberation Sans, sans-serif" font-size="22" fill="#e6e6e6">0.0</text>
</svg>
</body>
</html>
